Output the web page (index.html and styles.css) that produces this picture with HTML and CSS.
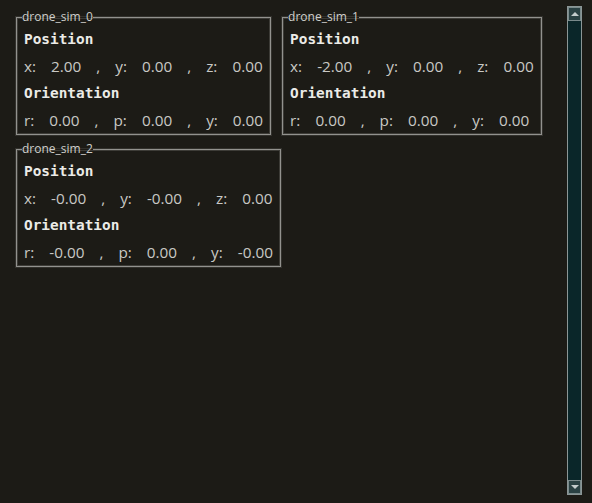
FILE: index.html
```html
<!DOCTYPE html>
<html>
<head>
<meta charset="utf-8">
<link rel="stylesheet" href="styles.css">
</head>
<body>
<div class="app">
  <main class="panels">
    <fieldset class="card">
      <legend class="card-title">drone_sim_0</legend>
      <div class="heading">Position</div>
      <div class="values"><span>x:</span><span>2.00</span><span>,</span><span>y:</span><span>0.00</span><span>,</span><span>z:</span><span>0.00</span></div>
      <div class="heading">Orientation</div>
      <div class="values"><span>r:</span><span>0.00</span><span>,</span><span>p:</span><span>0.00</span><span>,</span><span>y:</span><span>0.00</span></div>
    </fieldset>
    <fieldset class="card">
      <legend class="card-title">drone_sim_1</legend>
      <div class="heading">Position</div>
      <div class="values"><span>x:</span><span>-2.00</span><span>,</span><span>y:</span><span>0.00</span><span>,</span><span>z:</span><span>0.00</span></div>
      <div class="heading">Orientation</div>
      <div class="values"><span>r:</span><span>0.00</span><span>,</span><span>p:</span><span>0.00</span><span>,</span><span>y:</span><span>0.00</span></div>
    </fieldset>
    <fieldset class="card">
      <legend class="card-title">drone_sim_2</legend>
      <div class="heading">Position</div>
      <div class="values"><span>x:</span><span>-0.00</span><span>,</span><span>y:</span><span>-0.00</span><span>,</span><span>z:</span><span>0.00</span></div>
      <div class="heading">Orientation</div>
      <div class="values"><span>r:</span><span>-0.00</span><span>,</span><span>p:</span><span>0.00</span><span>,</span><span>y:</span><span>-0.00</span></div>
    </fieldset>
  </main>
  <aside class="scrollbar">
    <div class="scroll-btn"><span class="tri-up"></span></div>
    <div class="scroll-track"></div>
    <div class="scroll-btn"><span class="tri-down"></span></div>
  </aside>
</div>
</body>
</html>
```

FILE: styles.css
```css
html, body {
  margin: 0;
  padding: 0;
  background: #1c1b16;
  height: 100%;
}
.app {
  display: flex;
  height: 503px;
  box-sizing: border-box;
  padding: 6px 10px 8px 16px;
}
.panels {
  flex: 1;
  display: flex;
  flex-wrap: wrap;
  align-content: flex-start;
  column-gap: 11px;
  row-gap: 8px;
  padding-top: 5px;
  padding-right: 12px;
}
.card {
  margin: 0;
  border: 1px solid #92928e;
  box-shadow: inset 0 0 0 1px rgba(138,138,134,0.3), 0 0 0 1px rgba(138,138,134,0.2);
  padding: 3px 7px 0 7px;
  min-width: 0;
}
.card-title {
  font-family: "Open Sans", sans-serif;
  font-size: 12px;
  line-height: 12px;
  color: #cfcfcb;
  padding: 0;
  margin-left: -2px;
}
.heading {
  font-family: "DejaVu Sans Mono", monospace;
  font-weight: bold;
  font-size: 14.4px;
  color: #ebebe7;
  line-height: 27px;
}
.values {
  display: flex;
  gap: 15px;
  font-family: "Open Sans", sans-serif;
  font-size: 15.3px;
  color: #c9c9c5;
  line-height: 27px;
  white-space: nowrap;
}
.scrollbar {
  width: 15px;
  display: flex;
  flex-direction: column;
  border: 1px solid #8b9696;
  box-sizing: border-box;
  background: #0a2629;
}
.scroll-btn {
  height: 12px;
  border: 1px solid #7a8a8b;
  background: #2a4143;
  display: flex;
  align-items: center;
  justify-content: center;
}
.scroll-track {
  flex: 1;
}
.tri-up {
  width: 0;
  height: 0;
  border-left: 4px solid transparent;
  border-right: 4px solid transparent;
  border-bottom: 4px solid #c4cccc;
}
.tri-down {
  width: 0;
  height: 0;
  border-left: 4px solid transparent;
  border-right: 4px solid transparent;
  border-top: 4px solid #c4cccc;
}
```
